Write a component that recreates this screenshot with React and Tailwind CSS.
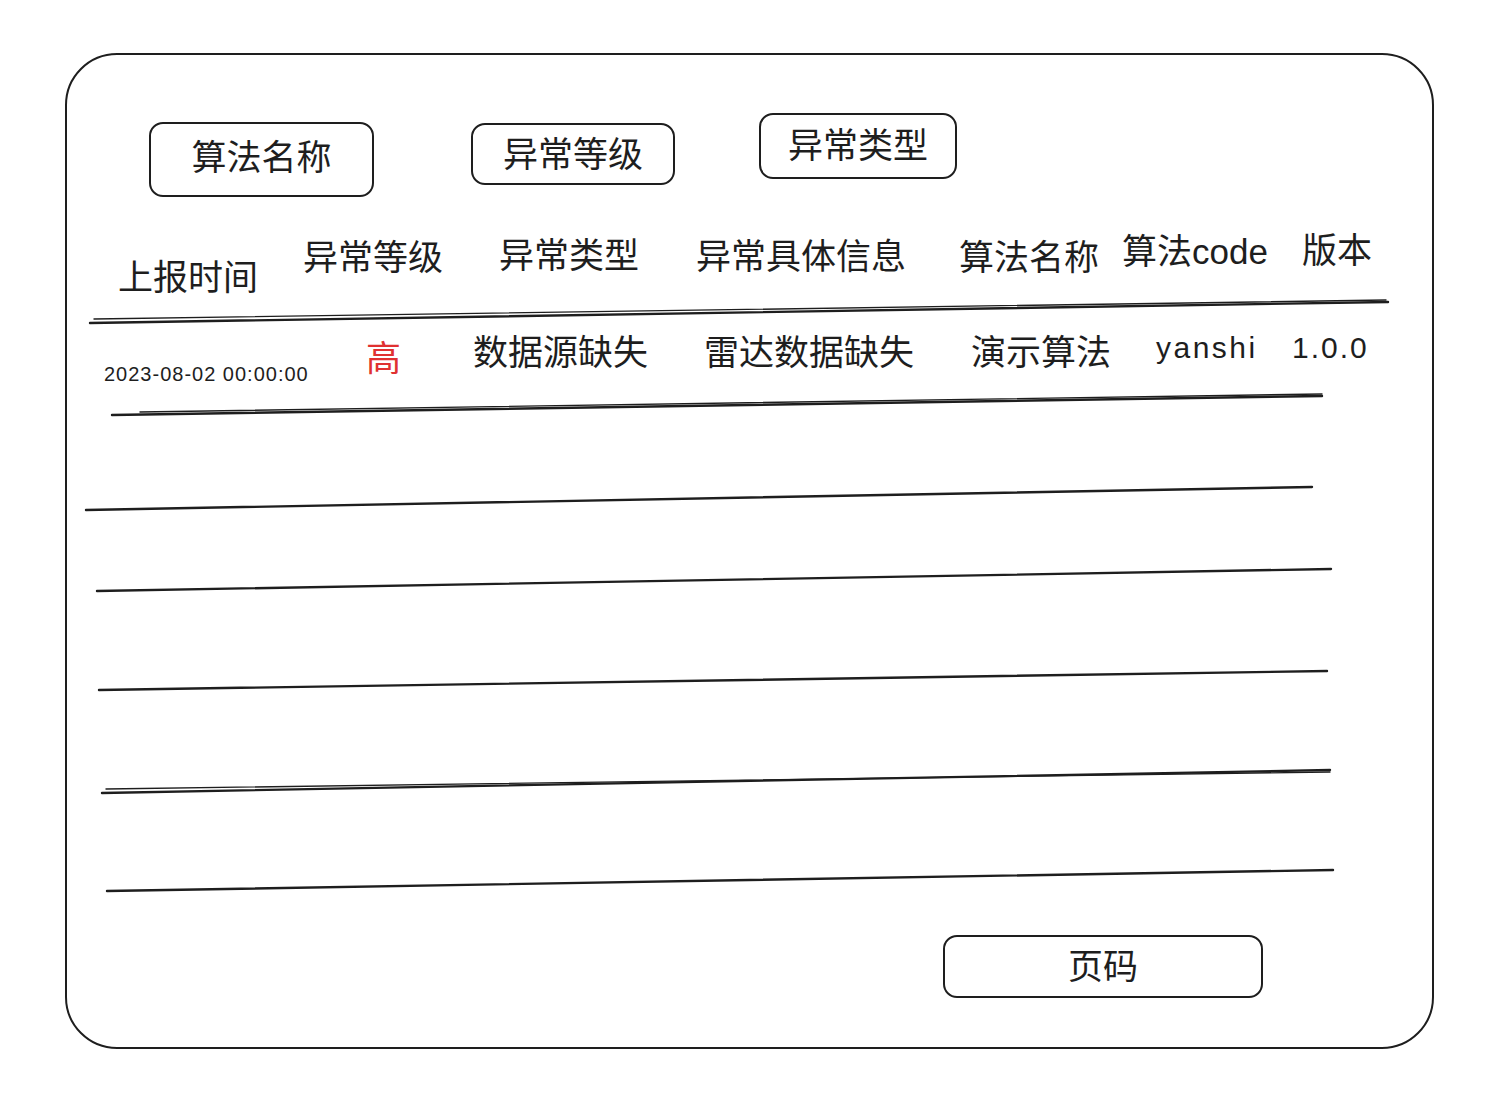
import React from "react";

const cjk = "font-['Noto_Sans_CJK_SC','Noto_Sans',sans-serif]";
const latin = "font-['Liberation_Sans','Noto_Sans_CJK_SC',sans-serif]";

function Lines() {
  const s = "#1e1e1e";
  const lines = [
    ["M90 323 L1388 302", 2.4],
    ["M94 319 L1386 300", 1.4],
    ["M112 415 L1322 396", 2.4],
    ["M140 412 L1322 394", 1.4],
    ["M86 510 L1312 487", 2.4],
    ["M97 591 L1331 569", 2.4],
    ["M99 690 L1327 671", 2.4],
    ["M102 793 L1330 770", 2.4],
    ["M106 789 L1330 772", 1.4],
    ["M107 891 L1333 870", 2.4],
  ];
  return (
    <svg
      className="absolute left-0 top-0 pointer-events-none"
      width="1506"
      height="1110"
      viewBox="0 0 1506 1110"
    >
      {lines.map(([d, w], i) => (
        <path key={i} d={d} stroke={s} strokeWidth={w} fill="none" strokeLinecap="round" />
      ))}
    </svg>
  );
}

function Btn({ cls, textCls, children }) {
  return (
    <div
      className={`absolute flex items-center justify-center border-2 border-[#1e1e1e] rounded-[14px] ${cls}`}
    >
      <span className={`${cjk} text-[35px] leading-none text-[#1e1e1e] ${textCls || ""}`}>{children}</span>
    </div>
  );
}

function T({ cls, children, font = cjk }) {
  return (
    <span className={`absolute whitespace-nowrap leading-none text-[#1e1e1e] ${font} ${cls}`}>
      {children}
    </span>
  );
}

export default function App() {
  return (
    <div className="relative w-[1506px] h-[1110px] bg-white overflow-hidden">
      <div className="ml-[65px] mt-[53px] w-[1369px] h-[996px] border-2 border-[#1e1e1e] rounded-[52px]" />

      <Btn cls="left-[149px] top-[122px] w-[225px] h-[75px]" textCls="mb-[10px]">算法名称</Btn>
      <Btn cls="left-[471px] top-[123px] w-[204px] h-[62px]" textCls="mb-[6px]">异常等级</Btn>
      <Btn cls="left-[759px] top-[113px] w-[198px] h-[66px]" textCls="mb-[8px]">异常类型</Btn>

      <T cls="left-[118px] top-[257px] text-[35px]">上报时间</T>
      <T cls="left-[303px] top-[237px] text-[35px]">异常等级</T>
      <T cls="left-[499px] top-[235px] text-[35px]">异常类型</T>
      <T cls="left-[696px] top-[236px] text-[35px]">异常具体信息</T>
      <T cls="left-[959px] top-[237px] text-[35px]">算法名称</T>
      <T cls="left-[1122px] top-[231px] text-[35px]">
        算法<span className={latin}>code</span>
      </T>
      <T cls="left-[1302px] top-[230px] text-[35px]">版本</T>

      <T font={latin} cls="left-[104px] top-[364px] text-[20px] tracking-[1px]">2023-08-02 00:00:00</T>
      <T cls="left-[366px] top-[338px] text-[35px] !text-[#e03131]">高</T>
      <T cls="left-[473px] top-[332px] text-[35px]">数据源缺失</T>
      <T cls="left-[704px] top-[332px] text-[35px]">雷达数据缺失</T>
      <T cls="left-[971px] top-[332px] text-[35px]">演示算法</T>
      <T font={latin} cls="left-[1156px] top-[333px] text-[30px] tracking-[2.5px]">yanshi</T>
      <T font={latin} cls="left-[1292px] top-[333px] text-[30px] tracking-[2px]">1.0.0</T>

      <Lines />

      <Btn cls="left-[943px] top-[935px] w-[320px] h-[63px]" textCls="mb-[6px]">页码</Btn>
    </div>
  );
}
